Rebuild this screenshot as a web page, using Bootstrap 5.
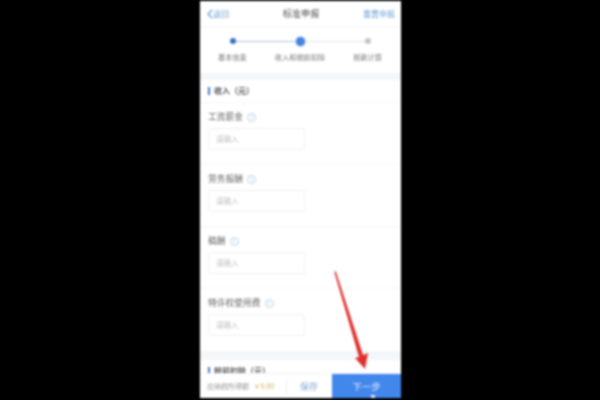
<!DOCTYPE html>
<html lang="zh">
<head>
<meta charset="utf-8">
<title>标准申报</title>
<link href="https://cdn.jsdelivr.net/npm/bootstrap@5.3.0/dist/css/bootstrap.min.css" rel="stylesheet">
<style>
html,body{height:400px;overflow:hidden}
body{background:#000;font-family:"Noto Sans CJK SC","Liberation Sans",sans-serif;color:#444}
.phone{width:201px;height:397px;margin:1px 0 0 200px;background:#fff;position:relative;overflow:hidden;filter:blur(.9px)}
.topbar{height:26px;padding:0 6px 0 7px;font-size:8px;border-bottom:1px solid #f5f5f5;flex:none}
.topbar .side{flex:1 1 0}
.topbar .ttl{font-size:9.2px;color:#555;letter-spacing:0}
.blue-t{color:#6ea6d8}
.stepper{height:46px;padding-top:9px;flex:none}
.track{height:10px;margin:0 30px}
.dot{border-radius:50%;flex:none}
.d1{width:6px;height:6px;background:#3a6fc4}
.d2{width:9px;height:9px;background:#4583e0;box-shadow:0 0 0 1px #cfe0f7}
.d3{width:6px;height:6px;background:#c4c4c4}
.ln{height:1px;flex:1 1 0}
.l1{background:#a9c0de}
.l2{background:#e4e4e4}
.labs{font-size:7.2px;color:#777;margin-top:6px;padding:0 19px 0 18px;justify-content:space-between}
.band{height:7px;background:#f3f7fa;flex:none}
.band.tall{height:9px}
.sect{height:23px;font-size:8px;font-weight:700;color:#555;padding-left:8px;border-bottom:1px solid #f7f7f7;flex:none}
.sect i{display:block;width:2px;height:8px;background:#3f78c8;margin-right:4px}
.fld{height:62px;padding:7px 0 0 8px;border-bottom:1px solid #f8f8f8;flex:none}
.fld.last{border-bottom:0}
.lab{font-size:8.75px;line-height:14px;color:#666;height:14px;gap:4px}
.qm{width:9px;height:9px;border:1px solid #b5d2ea;border-radius:50%;font-size:6px;line-height:7px;text-align:center;color:#a6c8e5}
.inp{width:97px;height:22px;margin-top:4px;border:1px solid #f1f1f1;border-radius:2px;font-size:7.5px;line-height:20px;padding-left:7px;color:#c2c2c2}
.scroller{flex:1 1 0;min-height:0;overflow:hidden}
.botbar{height:25px;flex:none;background:#fff;font-size:7px;color:#999;border-top:1px solid #f4f4f4}
.due{padding-left:7px;width:132px;gap:6px;flex:none}
.amt{color:#d6ab55}
.save{font-size:9px;color:#85a7d2;border-left:1px solid #eee;height:15px;line-height:15px;padding-left:13px;margin-left:6px}
.nextb{flex:1 1 0;background:#4287ec;color:#dfeafc;font-size:9.5px;border-radius:0;border:0;padding:0}
.nextb:hover{background:#4287ec;color:#dfeafc}
.arrow{position:absolute;left:0;top:-1px;width:201px;height:398px;pointer-events:none}
.speck{position:absolute;left:171px;top:394px;width:4px;height:3px;background:#dfe8f8}
</style>
</head>
<body>
<div class="phone d-flex flex-column">
  <div class="topbar d-flex align-items-center">
    <span class="side blue-t d-flex align-items-center"><svg width="6" height="10" viewBox="0 0 6 10"><path d="M5 1 1 5l4 4" fill="none" stroke="#5f8fc4" stroke-width="1.1"/></svg>返回</span>
    <span class="ttl">标准申报</span>
    <span class="side blue-t text-end">重置申报</span>
  </div>
  <div class="stepper">
    <div class="track d-flex align-items-center">
      <span class="dot d1"></span><span class="ln l1"></span><span class="dot d2"></span><span class="ln l2"></span><span class="dot d3"></span>
    </div>
    <div class="labs d-flex"><span>基本信息</span><span>收入和税前扣除</span><span>税款计算</span></div>
  </div>
  <div class="band"></div>
  <div class="scroller">
    <div class="sect d-flex align-items-center"><i></i>收入（元）</div>
    <div class="fld"><div class="lab d-flex align-items-center">工资薪金<span class="qm">?</span></div><div class="inp">请输入</div></div>
    <div class="fld"><div class="lab d-flex align-items-center">劳务报酬<span class="qm">?</span></div><div class="inp">请输入</div></div>
    <div class="fld"><div class="lab d-flex align-items-center">稿酬<span class="qm">?</span></div><div class="inp">请输入</div></div>
    <div class="fld last"><div class="lab d-flex align-items-center">特许权使用费<span class="qm">?</span></div><div class="inp">请输入</div></div>
    <div class="band tall"></div>
    <div class="sect d-flex align-items-center"><i></i>税前扣除（元）</div>
  </div>
  <div class="botbar d-flex align-items-stretch">
    <div class="due d-flex align-items-center"><span>应纳税所得额</span><span class="amt">¥ 0.00</span><span class="save">保存</span></div>
    <button class="btn nextb" type="button">下一步</button>
  </div>
  <span class="speck"></span>
  <svg class="arrow" viewBox="0 0 201 398"><path d="M134 271 136 272 163 355 168 353 165 369 155 358 159 357Z" fill="#e0302c"/></svg>
</div>
<script src="https://cdn.jsdelivr.net/npm/bootstrap@5.3.0/dist/js/bootstrap.bundle.min.js"></script>
</body>
</html>
